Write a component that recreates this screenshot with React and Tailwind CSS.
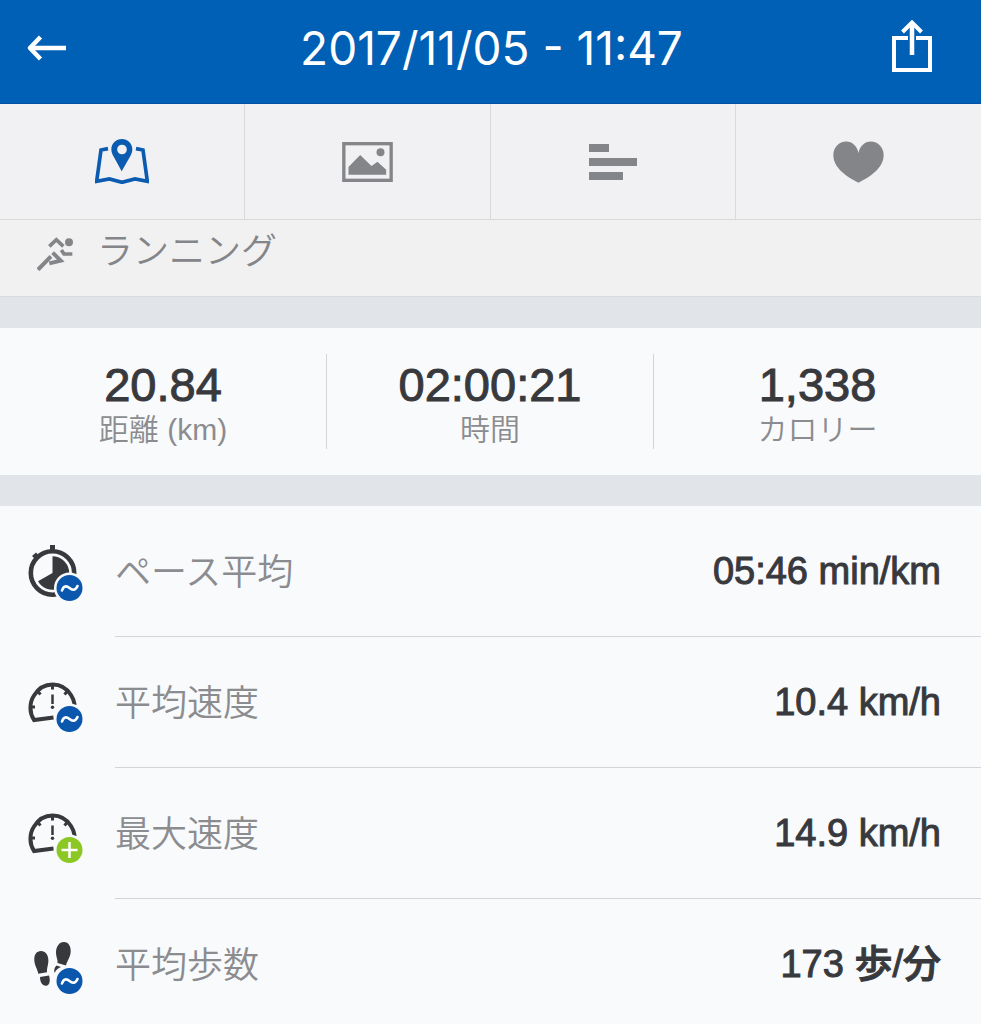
import clsx from 'clsx'

function BackIcon() {
  return (
    <svg className="w-10 h-7" viewBox="0 0 40 28" fill="none" stroke="currentColor" strokeWidth="4.5">
      <path d="M39 14H3" />
      <path d="M13.500 3L3 14l10.500 11" strokeLinejoin="round" />
    </svg>
  )
}

function ShareIcon() {
  return (
    <svg className="w-10 h-[52px]" viewBox="0 0 40 52" fill="none" stroke="currentColor">
      <path d="M16 18H2V50H38V18H24" strokeWidth="4" />
      <path d="M20 35V3" strokeWidth="4.5" />
      <path d="M10.5 12L20 2.5 29.5 12" strokeWidth="4" />
    </svg>
  )
}

function MapIcon() {
  return (
    <svg className="w-[54px] h-[45px]" viewBox="78 83 162 135">
      <path
        d="M117 112L96 116 83 210 121 203 159 213 198 203 235 210 222 116 201 112"
        fill="none"
        stroke="currentColor"
        strokeWidth="11"
      />
      <path
        fill="currentColor"
        fillRule="evenodd"
        d="M159 83c-18 0-32 13-32 31 0 9 3 15 8 24l23 42 24-42c5-9 8-15 8-24 0-18-14-31-31-31zm0 17a14.500 14.500 0 1 1 0 29a14.500 14.500 0 1 1 0-29z"
      />
    </svg>
  )
}

function PhotoIcon() {
  return (
    <svg className="w-[51px] h-10" viewBox="815 97 152 120">
      <rect x="820" y="102" width="142" height="110" fill="none" stroke="currentColor" strokeWidth="10" />
      <circle cx="930" cy="128" r="12" fill="currentColor" />
      <path d="M834 195V172L869 136 903 169 921 156 947 180V195Z" fill="currentColor" />
    </svg>
  )
}

function BarsIcon() {
  return (
    <svg className="w-12 h-9" viewBox="0 0 48 36" fill="currentColor">
      <rect width="20" height="8" />
      <rect y="14" width="48" height="8" />
      <rect y="28" width="34" height="8" />
    </svg>
  )
}

function HeartIcon() {
  return (
    <svg className="w-[51px] h-[42px]" viewBox="815 92 154 126" fill="currentColor">
      <path d="M892 128C888 107 873 93 855 93C833 93 816 111 816 134C816 173 856 199 892 218C928 199 968 173 968 134C968 111 951 93 929 93C911 93 896 107 892 128Z" />
    </svg>
  )
}

function RunnerIcon() {
  return (
    <svg className="w-9 h-[34px]" viewBox="109 82 108 102" fill="none" stroke="currentColor" strokeWidth="11">
      <circle cx="205" cy="98" r="12" fill="currentColor" stroke="none" />
      <path d="M146 110L167 90 188 110" />
      <path d="M112 180L151 140" strokeWidth="12" />
      <path d="M156 129L180 153 146 161" strokeWidth="12" />
      <path d="M182 121L190 133H215" />
    </svg>
  )
}

function Badge({ type }) {
  return (
    <g fill="none" stroke="#fff" strokeLinecap="round">
      <circle cx="41.500" cy="49" r="15.500" fill="#f9fafc" stroke="none" />
      <circle cx="41.500" cy="49" r="13" fill={type === 'plus' ? '#8cc823' : '#0b57ad'} stroke="none" />
      {type === 'plus' ? (
        <path d="M41.500 41V57M33.500 49H49.500" strokeWidth="2.500" strokeLinecap="butt" />
      ) : (
        <path d="M34 51.500C35.500 46.500 38.500 46.500 41.500 49S47.500 51.500 49.500 47" strokeWidth="2.600" />
      )}
    </g>
  )
}

function Stopwatch() {
  return (
    <>
      <circle cx="24.500" cy="34" r="21.700" fill="none" stroke="currentColor" strokeWidth="4.600" />
      <path d="M24.500 34V17.300A16.700 16.700 0 1 1 10 42.300Z" fill="currentColor" />
      <path d="M22 6H27V12H22ZM4 17L8 13.500 11.500 17 7.500 20.500Z" fill="currentColor" />
    </>
  )
}

function Gauge() {
  return (
    <g fill="none" stroke="currentColor">
      <path d="M25.500 47.500L6 50C1.500 43 1 33 6 25.500C15 11 34 11 43 25C45 28 46.300 31.500 46.700 35" strokeWidth="4" />
      <path d="M24.500 15V19.500M9.500 21L12.500 24.500M39.500 21L36.500 24.500M3 37H7" strokeWidth="3" />
      <path d="M24.500 24.500V34" strokeWidth="2.500" />
      <circle cx="24.500" cy="37.300" r="1.700" fill="currentColor" stroke="none" />
    </g>
  )
}

function Footsteps() {
  return (
    <g fill="currentColor">
      <path d="M13 19C8.500 19 6.300 22.500 6.300 27.500C6.300 33 9.500 37 10.300 41.800L19 40.300C18.500 36.500 20.400 33 20.400 28.500C20.400 23 17.500 19 13 19Z" />
      <path d="M12 45L21 43.500C22.500 48 22 53.500 18 53.700C14.500 54 12 50 12 45Z" />
      <path d="M36 10C31 10 28 15 28 20.500C28 25 30 27.500 29.500 31L38 33.500C39 29 42.700 25 42.700 19C42.700 14 40.500 10 36 10Z" />
      <path d="M28.500 33.500L33 35C30 36 28 38 26.500 41C25.800 38 26.500 35 28.500 33.500Z" />
    </g>
  )
}

const tabs = [
  { name: 'Map', Icon: MapIcon, active: true },
  { name: 'Photos', Icon: PhotoIcon },
  { name: 'Splits', Icon: BarsIcon },
  { name: 'Heart rate', Icon: HeartIcon },
]

const totals = [
  { value: '20.84', label: '距離 (km)' },
  { value: '02:00:21', label: '時間' },
  { value: '1,338', label: 'カロリー' },
]

const details = [
  { label: 'ペース平均', value: '05:46 min/km', Icon: Stopwatch, badge: 'average' },
  { label: '平均速度', value: '10.4 km/h', Icon: Gauge, badge: 'average' },
  { label: '最大速度', value: '14.9 km/h', Icon: Gauge, badge: 'plus' },
  { label: '平均歩数', value: '173 歩/分', Icon: Footsteps, badge: 'average' },
]

export default function App() {
  return (
    <main className="min-h-screen bg-[#f9fafc] text-[#38393d] font-['Liberation_Sans','Noto_Sans_CJK_JP',sans-serif]">
      <header className="grid h-[104px] grid-cols-[1fr_auto_1fr] items-center border-b border-[#0550a5] bg-[#0060b6] pb-3 pl-[27px] pr-[49px] text-white">
        <button type="button" aria-label="Back" className="justify-self-start pt-1">
          <BackIcon />
        </button>
        <h1 className="pt-1 pl-6 text-[46px] leading-none font-normal font-['Inter',sans-serif]">2017/11/05 - 11:47</h1>
        <button type="button" aria-label="Share" className="justify-self-end">
          <ShareIcon />
        </button>
      </header>

      <nav className="grid grid-cols-4 border-b border-[#d9d9da] bg-[#f1f1f3]">
        {tabs.map(({ name, Icon, active }) => (
          <button
            key={name}
            type="button"
            aria-label={name}
            className={clsx(
              'flex h-[115px] items-center justify-center border-r border-[#d9d9da] last:border-r-0',
              active ? 'text-[#0b5cb0]' : 'text-[#848588]'
            )}
          >
            <Icon />
          </button>
        ))}
      </nav>

      <section className="flex h-[77px] items-center gap-6 border-b border-[#d9dadb] bg-[#f1f1f2] pb-2 pl-[37px] text-[#848588]">
        <RunnerIcon />
        <h2 className="pb-1 text-[36px] leading-none font-[350]">ランニング</h2>
      </section>

      <section className="grid grid-cols-3 border-t-[31px] border-b-[31px] border-[#e1e5e9] py-[26px]">
        {totals.map((t) => (
          <div key={t.label} className="flex h-[95px] flex-col items-center border-r border-[#d3d4d7] pt-2 last:border-r-0">
            <strong className="text-[47px] leading-[46px] font-medium [-webkit-text-stroke:1px]">{t.value}</strong>
            <span className="mt-1 text-[30px] leading-9 font-[350] text-[#8b8c8f]">{t.label}</span>
          </div>
        ))}
      </section>

      <ul>
        {details.map(({ label, value, Icon, badge }) => (
          <li key={label} className="group flex pl-7">
            <svg className="mt-[33px] mr-[31px] h-16 w-14 shrink-0" viewBox="0 0 56 64">
              <Icon />
              <Badge type={badge} />
            </svg>
            <div className="flex flex-1 items-center justify-between border-b border-[#d3d4d7] pt-[33px] pr-10 pb-[33px] group-last:border-b-0 group-last:pb-7">
              <span className="flex h-16 items-center pt-1 text-[36px] leading-none font-[350] text-[#8b8c8f]">{label}</span>
              <strong className="text-[38px] leading-none font-medium [-webkit-text-stroke:1px]">{value}</strong>
            </div>
          </li>
        ))}
      </ul>
    </main>
  )
}
